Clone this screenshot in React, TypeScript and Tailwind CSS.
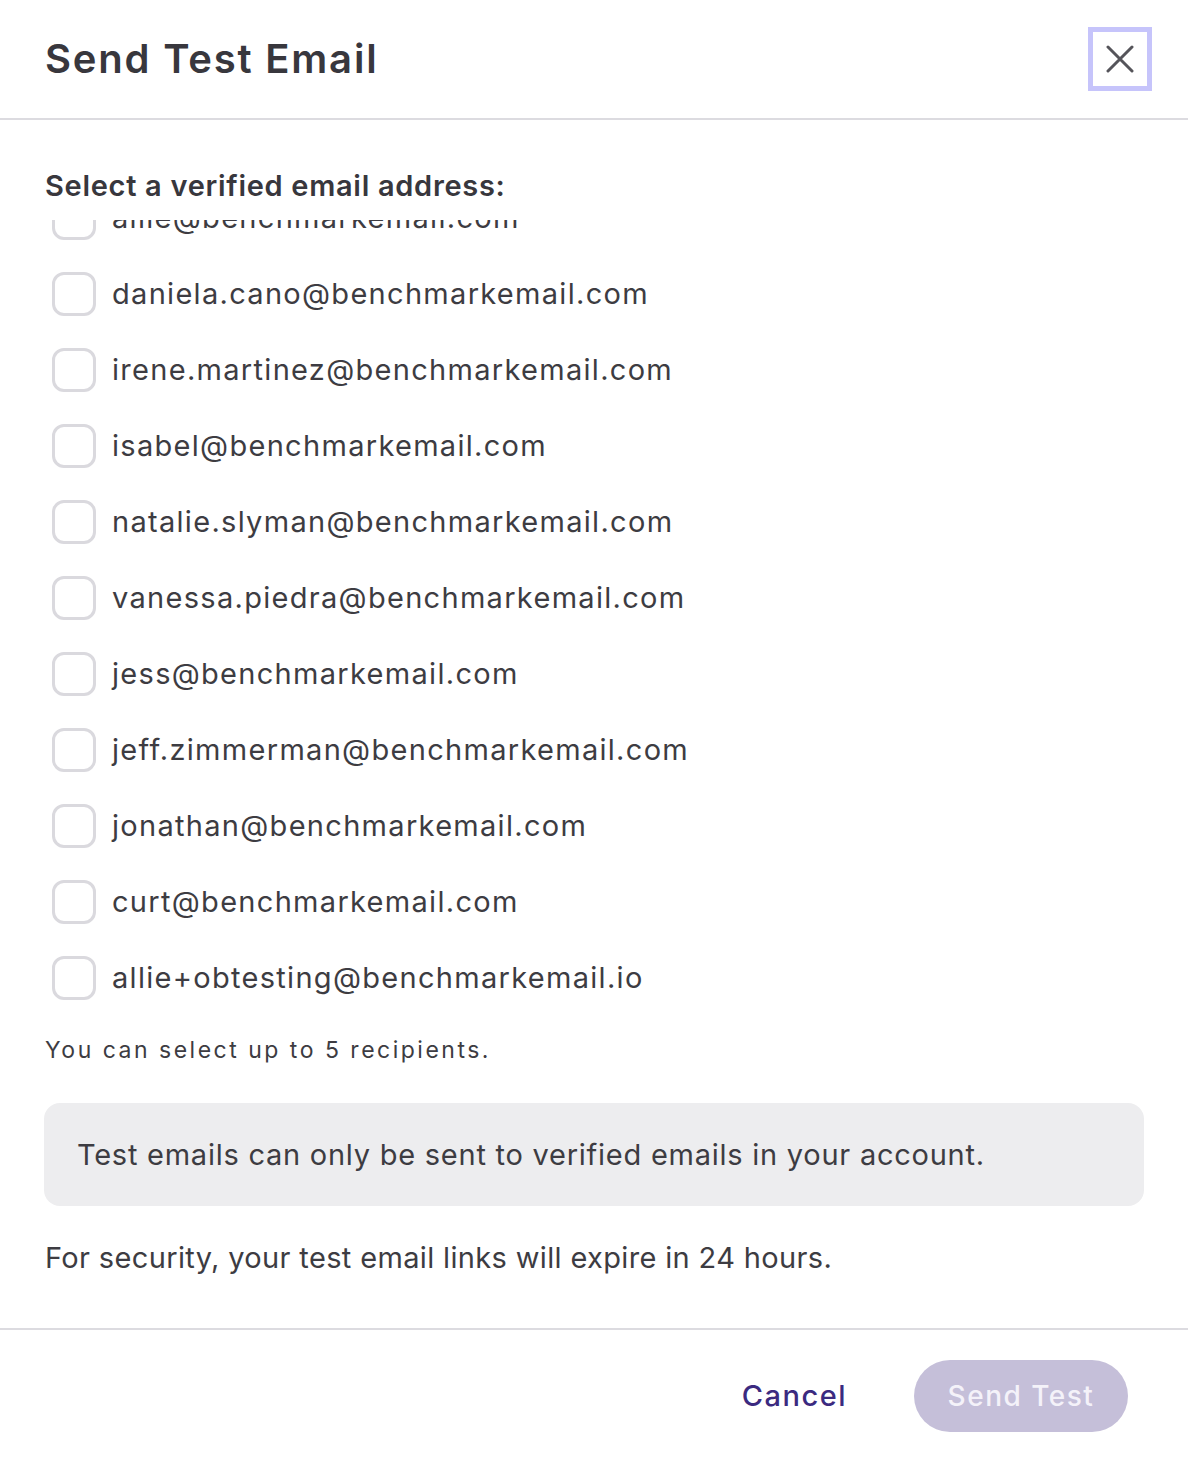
import { useState } from 'react'

const emails = [
  'allie@benchmarkemail.com',
  'daniela.cano@benchmarkemail.com',
  'irene.martinez@benchmarkemail.com',
  'isabel@benchmarkemail.com',
  'natalie.slyman@benchmarkemail.com',
  'vanessa.piedra@benchmarkemail.com',
  'jess@benchmarkemail.com',
  'jeff.zimmerman@benchmarkemail.com',
  'jonathan@benchmarkemail.com',
  'curt@benchmarkemail.com',
  'allie+obtesting@benchmarkemail.io',
]

export default function App() {
  const [selected, setSelected] = useState<string[]>([])

  const toggle = (email: string) => {
    setSelected((prev) =>
      prev.includes(email) ? prev.filter((e) => e !== email) : prev.length < 5 ? [...prev, email] : prev
    )
  }

  return (
    <div
      className="w-[1188px] h-[1462px] bg-white text-[#3d3c42] flex flex-col"
      style={{ fontFamily: 'Inter, "Noto Sans", sans-serif' }}
    >
      <div className="h-[118px] flex items-center justify-between pl-[45px] pr-[36px] border-b-2 border-[#dcdbe0] box-content">
        <h1 className="text-[40px] font-semibold text-[#38373d] tracking-[1.8px]">Send Test Email</h1>
        <button className="w-[64px] h-[64px] border-[5px] border-[#c6c4fb] flex items-center justify-center">
          <svg width="28" height="28" viewBox="0 0 28 28" fill="none" stroke="#55545a" strokeWidth="3" strokeLinecap="round">
            <path d="M2 2L26 26M26 2L2 26" />
          </svg>
        </button>
      </div>

      <div className="px-[44px] pt-[46px]">
        <div className="h-[40px] leading-[40px] text-[29px] font-semibold text-[#38373d] tracking-[0.7px] pl-[1px]">
          Select a verified email address:
        </div>
        {/* list is scrolled a little, so the first row is cut at the top */}
        <div className="mt-[14px] h-[796px] overflow-hidden">
          <div className="-mt-[40px]">
            {emails.map((email) => (
              <label key={email} className="h-[76px] flex items-center gap-[16px] pl-[8px] cursor-pointer">
                <span
                  onClick={() => toggle(email)}
                  className={`w-[44px] h-[44px] rounded-[12px] border-[3px] shrink-0 ${
                    selected.includes(email) ? 'border-[#3b2a80] bg-[#3b2a80]' : 'border-[#dad9de] bg-white'
                  }`}
                />
                <span className="text-[29px] leading-[40px] tracking-[1.3px]">{email}</span>
              </label>
            ))}
          </div>
        </div>

        <p className="mt-[19px] text-[23px] leading-[30px] tracking-[2.5px] pl-[1px]">You can select up to 5 recipients.</p>

        <div className="mt-[38px] h-[103px] rounded-[16px] bg-[#ededef] flex items-center px-[33px]">
          <p className="text-[29px] leading-[40px] tracking-[0.75px]">
            Test emails can only be sent to verified emails in your account.
          </p>
        </div>

        <p className="mt-[32px] text-[29px] leading-[40px] tracking-[0.35px] pl-[1px] pb-[50px]">
          For security, your test email links will expire in 24 hours.
        </p>
      </div>

      <div className="border-t-2 border-[#dcdbe0] flex-1 flex items-center justify-end pr-[60px] gap-[67px]">
        <button className="text-[29px] font-medium text-[#3b2a80] tracking-[1.5px]">Cancel</button>
        <button className="h-[72px] w-[214px] rounded-full bg-[#c5bfd9] text-[28px] font-medium text-[#f4f2f9] tracking-[1.5px]">
          Send Test
        </button>
      </div>
    </div>
  )
}
